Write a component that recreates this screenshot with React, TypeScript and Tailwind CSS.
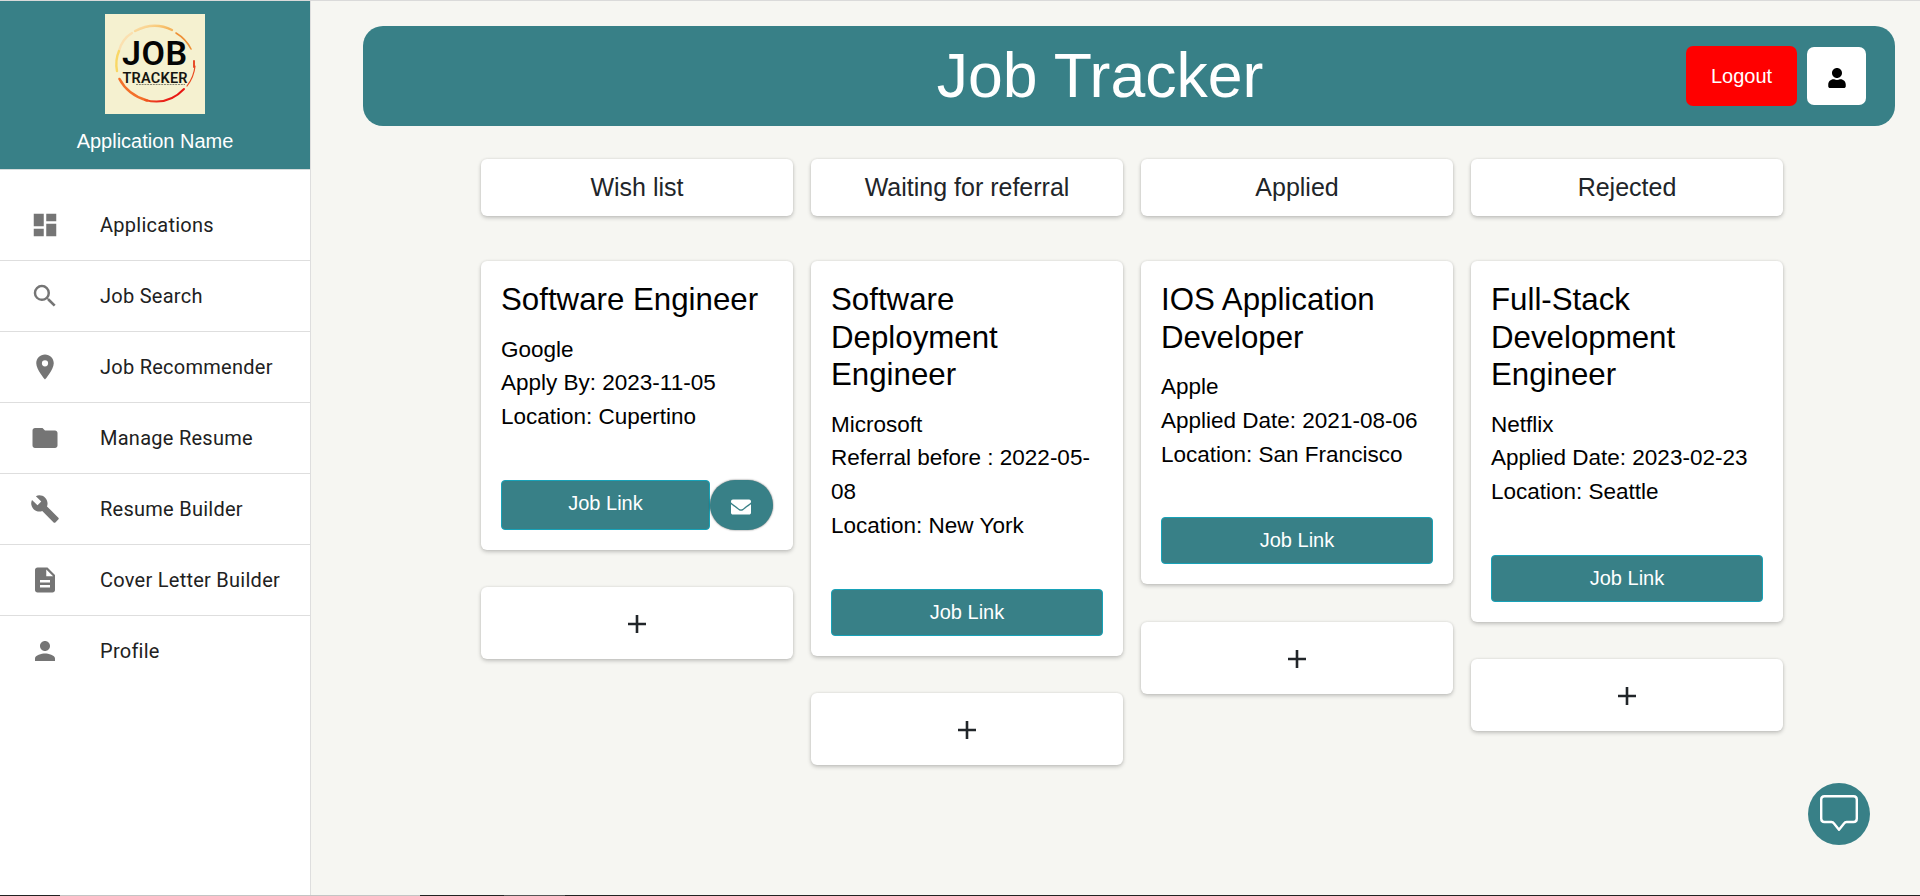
import type { ReactNode } from 'react';
import { MdDashboard, MdSearch, MdLocationOn, MdFolder, MdBuild, MdDescription, MdPerson } from 'react-icons/md';
import { FaUser, FaEnvelope } from 'react-icons/fa';

const nav: { label: string; icon: ReactNode }[] = [
  { label: 'Applications', icon: <MdDashboard /> },
  { label: 'Job Search', icon: <MdSearch /> },
  { label: 'Job Recommender', icon: <MdLocationOn /> },
  { label: 'Manage Resume', icon: <MdFolder /> },
  { label: 'Resume Builder', icon: <MdBuild /> },
  { label: 'Cover Letter Builder', icon: <MdDescription /> },
  { label: 'Profile', icon: <MdPerson /> },
];

type Job = { title: string; company: string; date: string; location: string; mail?: boolean };

const columns: { name: string; job: Job }[] = [
  { name: 'Wish list', job: { title: 'Software Engineer', company: 'Google', date: 'Apply By: 2023-11-05', location: 'Cupertino', mail: true } },
  { name: 'Waiting for referral', job: { title: 'Software Deployment Engineer', company: 'Microsoft', date: 'Referral before : 2022-05-08', location: 'New York' } },
  { name: 'Applied', job: { title: 'IOS Application Developer', company: 'Apple', date: 'Applied Date: 2021-08-06', location: 'San Francisco' } },
  { name: 'Rejected', job: { title: 'Full-Stack Development Engineer', company: 'Netflix', date: 'Applied Date: 2023-02-23', location: 'Seattle' } },
];

function Logo() {
  return (
    <svg viewBox="0 0 100 100" className="block size-[100px] bg-[#f5f1d0]">
      <defs>
        <linearGradient id="top" x1="0" x2="1" y1="0" y2="0.3">
          <stop offset="0" stopColor="#fbe3b4" />
          <stop offset="0.6" stopColor="#f9c978" />
          <stop offset="1" stopColor="#f5b45c" />
        </linearGradient>
        <linearGradient id="bottom" x1="0" x2="1" y1="0" y2="0.3">
          <stop offset="0" stopColor="#f47a25" />
          <stop offset="0.6" stopColor="#ea2a1c" />
          <stop offset="1" stopColor="#e81010" />
        </linearGradient>
      </defs>
      <g fill="none" strokeLinecap="round">
        <path d="M14 37Q17 25 27 19" stroke="#fbe0b0" strokeWidth="2.4" />
        <path d="M30 17Q49 7 67 16" stroke="url(#top)" strokeWidth="2.4" />
        <path d="M71 19Q81 25 86 35" stroke="#ee8f35" strokeWidth="1.6" />
        <path d="M14 37Q10 46 12 57" stroke="#f9d765" strokeWidth="2.4" />
        <path d="M14.5 65Q23 81 42 86.5" stroke="#f3702a" strokeWidth="2.6" />
        <path d="M40 86Q63 92 79 75" stroke="url(#bottom)" strokeWidth="2" />
        <path d="M82 72Q89 63 90 52" stroke="#ea4a20" strokeWidth="1.2" />
        <path d="M89 47V53" stroke="#e63a18" strokeWidth="1.8" />
      </g>
      <text x="17" y="51" textLength="65" fontSize="34" fontWeight="600" fontFamily="Roboto, sans-serif" fill="#050505">JOB</text>
      <text x="17.5" y="69" textLength="65" fontSize="14.5" fontWeight="600" fontFamily="Roboto, sans-serif" fill="#151510">TRACKER</text>
      <path d="M31 70.5H80" stroke="#57574b" strokeWidth="0.7" strokeDasharray="2 0.8" />
    </svg>
  );
}

function JobCard({ job }: { job: Job }) {
  return (
    <article className="rounded-[6px] bg-white p-5 text-black shadow-[0_2px_4px_rgba(0,0,0,0.2),0_0_3px_rgba(0,0,0,0.1)]">
      <h2 className="text-[31.25px] leading-[37.5px]">{job.title}</h2>
      <div className="mt-3.5 text-[22.5px] leading-[33.75px]">
        <p>{job.company}</p>
        <p>{job.date}</p>
        <p>Location: {job.location}</p>
      </div>
      <div className="mt-[46px] flex">
        <button className={`flex flex-1 justify-center rounded-[4px] border border-[#17a2b8] bg-[#388087] pt-[7px] text-[20px] leading-[30px] text-white ${job.mail ? 'h-[50px]' : 'h-[47px]'}`}>Job Link</button>
        {job.mail && (
          <button className="flex h-[50px] w-[63px] items-center justify-center rounded-[25px] bg-[#388087] pt-1 pr-0.5 text-[20px] text-white shadow-[0_0_2px_rgba(0,0,0,0.6)]">
            <FaEnvelope />
          </button>
        )}
      </div>
    </article>
  );
}

export default function App() {
  return (
    <div className="flex h-[896px] w-[1920px] flex-col overflow-hidden border-t border-[#dadada] bg-[#f6f6f2] font-['Liberation_Sans',Arial,sans-serif]">
      <div className="flex min-h-0 flex-1">
        <aside className="w-[311px] shrink-0 border-r border-[#dedede] bg-white">
          <div className="flex h-[169px] flex-col items-center border-b border-[#d5dcdc] bg-[#388087] pt-[13px] text-[20px] leading-[30px] text-white">
            <Logo />
            <p className="mt-3">Application Name</p>
          </div>
          <nav className="pt-5">
            {nav.map((n) => (
              <div key={n.label} className="flex h-[71px] items-center border-b border-[#dedede] pl-[30px] text-[20px] last:border-transparent">
                <span className="w-[70px] text-[30px] text-[#757575]">{n.icon}</span>
                <span className="font-[Roboto,sans-serif] tracking-[0.26px] text-[#212121]">{n.label}</span>
              </div>
            ))}
          </nav>
        </aside>
        <main className="flex flex-1 flex-col pt-[25px] pr-[25px] pl-[52px]">
          <header className="grid h-[100px] grid-cols-[1fr_auto_1fr] items-center rounded-[20px] bg-[#388087] pr-[29px] pl-[7px]">
            <span />
            <h1 className="pr-9 pb-0.5 text-[62.5px] leading-[75px] text-white">Job Tracker</h1>
            <div className="flex items-center justify-end gap-2.5">
              <button className="h-[60px] w-[111px] rounded-[7px] bg-[#ff0000] text-[20px] text-white">Logout</button>
              <button className="flex h-[58px] w-[59px] items-center justify-center rounded-[7px] bg-white pt-1 text-[20px] text-black">
                <FaUser />
              </button>
            </div>
          </header>
          <div className="mt-[33px] ml-[118px] flex items-start gap-[18px]">
            {columns.map((c) => (
              <section key={c.name} className="w-[312px]">
                <div className="flex h-[57px] items-center justify-center rounded-[6px] bg-white text-[25px] text-[#212529] shadow-[0_2px_4px_rgba(0,0,0,0.2),0_0_3px_rgba(0,0,0,0.1)]">{c.name}</div>
                <div className="mt-[45px]"><JobCard job={c.job} /></div>
                <button className="mt-[37.5px] flex h-[72px] w-full items-center justify-center rounded-[6px] bg-white shadow-[0_2px_4px_rgba(0,0,0,0.2),0_0_3px_rgba(0,0,0,0.1)]">
                  <svg viewBox="0 0 18 18" className="mt-0.5 size-[18px]"><path d="M9 0V18M0 9H18" stroke="#212529" strokeWidth="2.6" /></svg>
                </button>
              </section>
            ))}
          </div>
        </main>
      </div>
      <div className="flex h-px shrink-0 bg-[#222]">
        <span className="ml-[60px] w-[360px] bg-[#c4c4c4]" />
        <span className="ml-[84px] w-[61px] bg-[#555]" />
      </div>
      <button className="absolute top-[783px] left-[1808px] flex size-[62px] justify-center rounded-full bg-[#388087] pt-3">
        <svg viewBox="0 0 38 36" className="h-9 w-[38px]" fill="none" stroke="white" strokeWidth="2.4" strokeLinejoin="round">
          <path d="M4.5 1.200H33.500Q36.800 1.200 36.800 4.500V23.500Q36.800 27 33.500 27H26.500Q25 27 24 28.500L19 34.800L14 28.500Q13 27 11.500 27H4.500Q1.200 27 1.200 23.500V4.500Q1.200 1.200 4.500 1.200Z" />
        </svg>
      </button>
    </div>
  );
}
